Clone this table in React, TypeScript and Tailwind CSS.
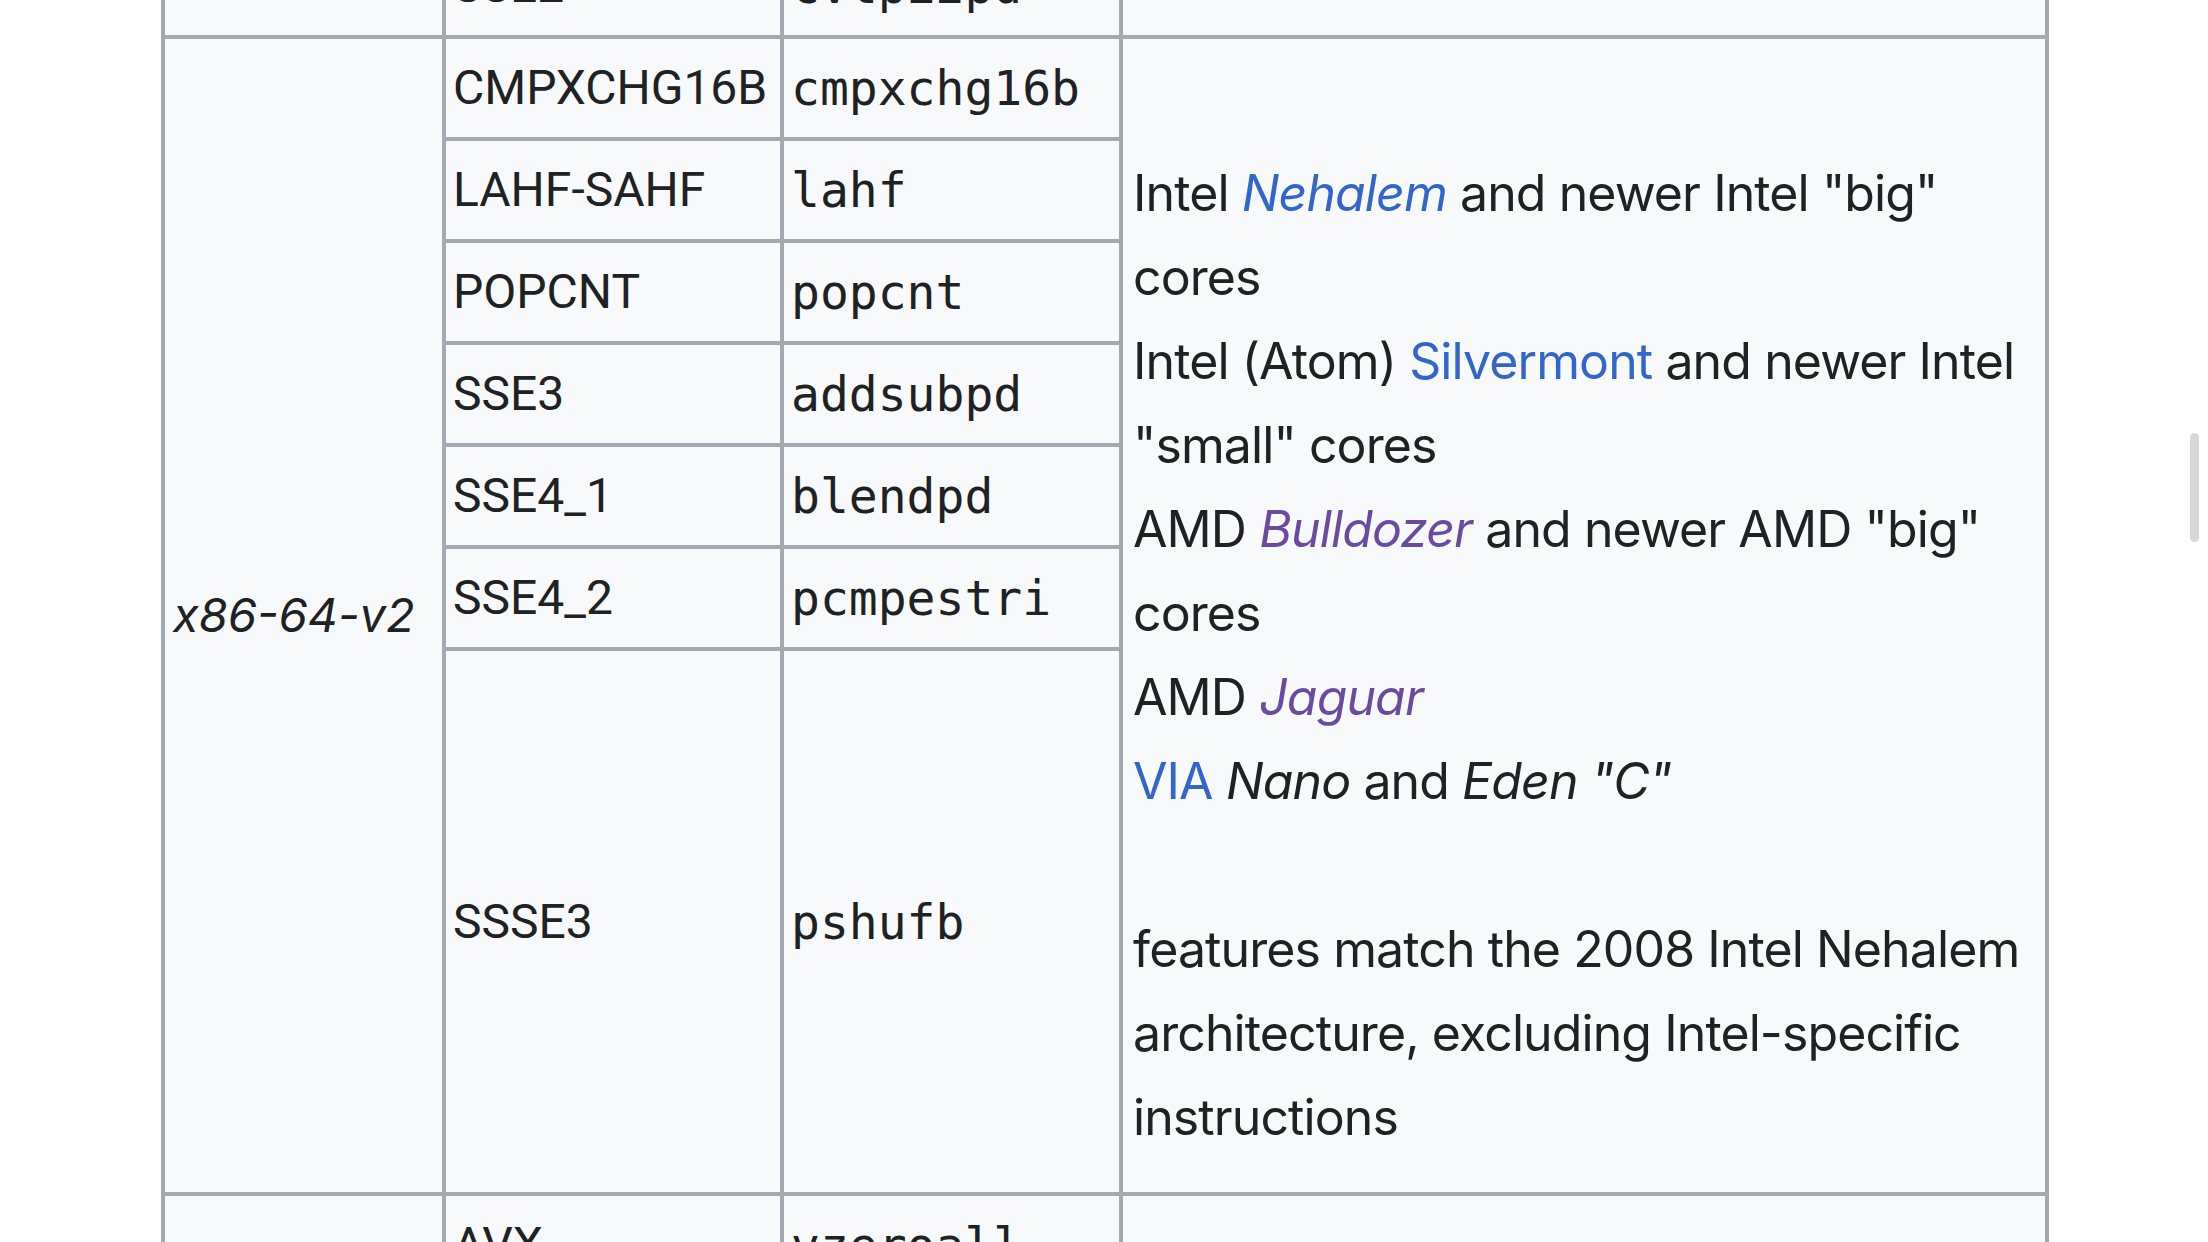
import React from 'react';

const sans = "font-['Inter','Noto_Sans',sans-serif]";
const leftSans = "font-['Roboto','Liberation_Sans',sans-serif]";
const mono = "font-['DejaVu_Sans_Mono','Liberation_Mono',monospace]";

const cell = 'border-[4px] border-[#a2a9b1] bg-[#f8f9fa] align-middle';

const features = [
  { name: 'CMPXCHG16B', op: 'cmpxchg16b' },
  { name: 'LAHF-SAHF', op: 'lahf' },
  { name: 'POPCNT', op: 'popcnt' },
  { name: 'SSE3', op: 'addsubpd' },
  { name: 'SSE4_1', op: 'blendpd' },
  { name: 'SSE4_2', op: 'pcmpestri' },
  { name: 'SSSE3', op: 'pshufb' },
];

const NameCell = ({ children }: { children: React.ReactNode }) => (
  <td className={`${cell} ${leftSans} px-[7px] text-[48px] leading-[84px] whitespace-nowrap`}>{children}</td>
);

const OpCell = ({ children }: { children: React.ReactNode }) => (
  <td className={`${cell} ${mono} px-[7px] text-[48px] leading-[84px] whitespace-nowrap`}>{children}</td>
);

const Link = ({ children, visited, italic }: { children: React.ReactNode; visited?: boolean; italic?: boolean }) => (
  <a className={`${visited ? 'text-[#6b4ba1]' : 'text-[#3366cc]'} ${italic ? 'italic' : ''}`}>{children}</a>
);

const App = () => {
  return (
    <div className="relative h-[1242px] w-[2208px] overflow-hidden bg-white text-[#202122]">
      <div className="pl-[161px] mt-[-67px]">
        <table className="w-[1884px] table-fixed border-collapse border-[3px] border-[#a2a9b1]">
          <colgroup>
            <col className="w-[281px]" />
            <col className="w-[338px]" />
            <col className="w-[339px]" />
            <col className="w-[926px]" />
          </colgroup>
          <tbody>
            <tr className="h-[102px]">
              <td className={cell}></td>
              <NameCell>SSE2</NameCell>
              <OpCell>cvtpi2pd</OpCell>
              <td className={cell}></td>
            </tr>
            {features.map((f, i) => (
              <tr key={f.name} className={i === 6 ? 'h-[545px]' : 'h-[102px]'}>
                {i === 0 && (
                  <td rowSpan={7} className={`${cell} ${sans} px-[8px] text-[47px] italic`}>
                    x86-64-v2
                  </td>
                )}
                <NameCell>{f.name}</NameCell>
                <OpCell>{f.op}</OpCell>
                {i === 0 && (
                  <td rowSpan={7} className={`${cell} ${sans} pl-[10px] pr-[4px] pt-[112px] align-top text-[50px] leading-[84px] tracking-[-0.9px]`}>
                    <div>
                      Intel <Link italic>Nehalem</Link> and newer Intel "big" cores
                    </div>
                    <div>
                      Intel (Atom) <Link>Silvermont</Link> and newer Intel "small" cores
                    </div>
                    <div>
                      AMD <Link visited italic>Bulldozer</Link> and newer AMD "big" cores
                    </div>
                    <div>
                      AMD <Link visited italic>Jaguar</Link>
                    </div>
                    <div>
                      <Link>VIA</Link> <i>Nano</i> and <i>Eden "C"</i>
                    </div>
                    <div className="h-[84px]"></div>
                    <div>features match the 2008 Intel Nehalem architecture, excluding Intel-specific instructions</div>
                  </td>
                )}
              </tr>
            ))}
            <tr className="h-[102px]">
              <td className={cell}></td>
              <NameCell>AVX</NameCell>
              <OpCell>vzeroall</OpCell>
              <td className={cell}></td>
            </tr>
          </tbody>
        </table>
      </div>
      <div className="absolute left-[2190px] top-[433px] h-[109px] w-[9px] rounded-full bg-[#d6d6d6]"></div>
    </div>
  );
};

export default App;
